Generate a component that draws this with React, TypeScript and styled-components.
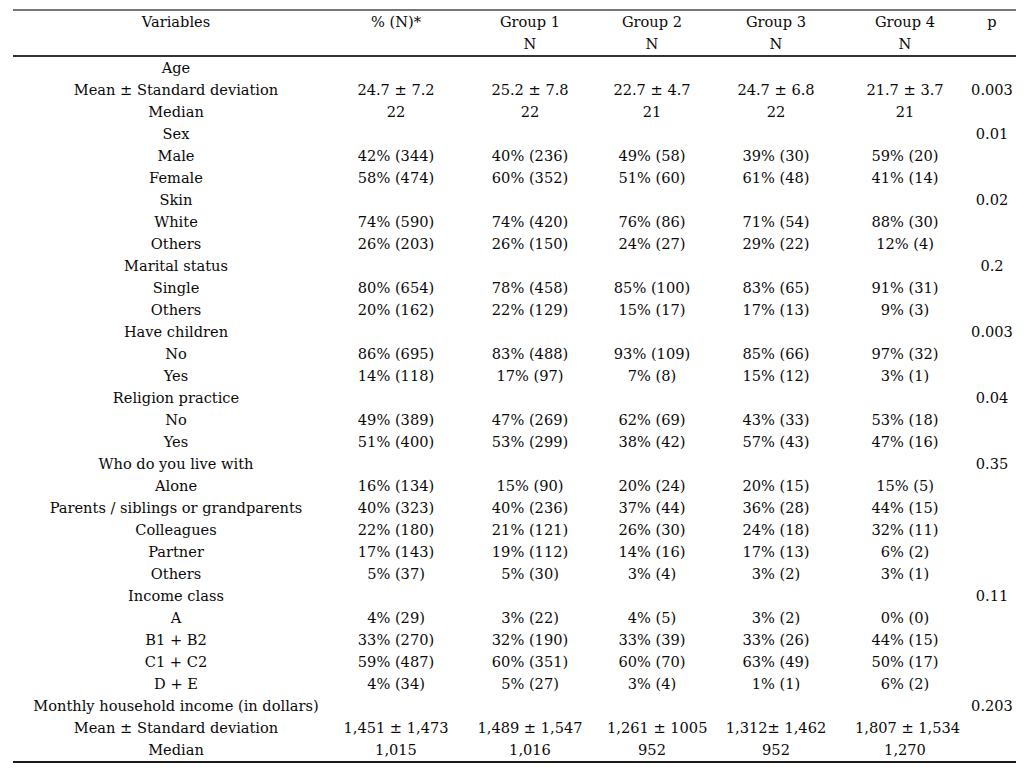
import React from 'react';
import styled, { createGlobalStyle } from 'styled-components';

type Row = {
  label: string;
  values?: string[];
  p?: string;
};

const rows: Row[] = [
  { label: 'Age' },
  { label: 'Mean ± Standard deviation', values: ['24.7 ± 7.2', '25.2 ± 7.8', '22.7 ± 4.7', '24.7 ± 6.8', '21.7 ± 3.7'], p: '0.003' },
  { label: 'Median', values: ['22', '22', '21', '22', '21'] },
  { label: 'Sex', p: '0.01' },
  { label: 'Male', values: ['42% (344)', '40% (236)', '49% (58)', '39% (30)', '59% (20)'] },
  { label: 'Female', values: ['58% (474)', '60% (352)', '51% (60)', '61% (48)', '41% (14)'] },
  { label: 'Skin', p: '0.02' },
  { label: 'White', values: ['74% (590)', '74% (420)', '76% (86)', '71% (54)', '88% (30)'] },
  { label: 'Others', values: ['26% (203)', '26% (150)', '24% (27)', '29% (22)', '12% (4)'] },
  { label: 'Marital status', p: '0.2' },
  { label: 'Single', values: ['80% (654)', '78% (458)', '85% (100)', '83% (65)', '91% (31)'] },
  { label: 'Others', values: ['20% (162)', '22% (129)', '15% (17)', '17% (13)', '9% (3)'] },
  { label: 'Have children', p: '0.003' },
  { label: 'No', values: ['86% (695)', '83% (488)', '93% (109)', '85% (66)', '97% (32)'] },
  { label: 'Yes', values: ['14% (118)', '17% (97)', '7% (8)', '15% (12)', '3% (1)'] },
  { label: 'Religion practice', p: '0.04' },
  { label: 'No', values: ['49% (389)', '47% (269)', '62% (69)', '43% (33)', '53% (18)'] },
  { label: 'Yes', values: ['51% (400)', '53% (299)', '38% (42)', '57% (43)', '47% (16)'] },
  { label: 'Who do you live with', p: '0.35' },
  { label: 'Alone', values: ['16% (134)', '15% (90)', '20% (24)', '20% (15)', '15% (5)'] },
  { label: 'Parents / siblings or grandparents', values: ['40% (323)', '40% (236)', '37% (44)', '36% (28)', '44% (15)'] },
  { label: 'Colleagues', values: ['22% (180)', '21% (121)', '26% (30)', '24% (18)', '32% (11)'] },
  { label: 'Partner', values: ['17% (143)', '19% (112)', '14% (16)', '17% (13)', '6% (2)'] },
  { label: 'Others', values: ['5% (37)', '5% (30)', '3% (4)', '3% (2)', '3% (1)'] },
  { label: 'Income class', p: '0.11' },
  { label: 'A', values: ['4% (29)', '3% (22)', '4% (5)', '3% (2)', '0% (0)'] },
  { label: 'B1 + B2', values: ['33% (270)', '32% (190)', '33% (39)', '33% (26)', '44% (15)'] },
  { label: 'C1 + C2', values: ['59% (487)', '60% (351)', '60% (70)', '63% (49)', '50% (17)'] },
  { label: 'D + E', values: ['4% (34)', '5% (27)', '3% (4)', '1% (1)', '6% (2)'] },
  { label: 'Monthly household income (in dollars)', p: '0.203' },
  { label: 'Mean ± Standard deviation', values: ['1,451 ± 1,473', '1,489 ± 1,547', '1,261 ± 1005', '1,312± 1,462', '1,807 ± 1,534'] },
  { label: 'Median', values: ['1,015', '1,016', '952', '952', '1,270'] },
];

const headers = [
  ['Variables', ''],
  ['% (N)*', ''],
  ['Group 1', 'N'],
  ['Group 2', 'N'],
  ['Group 3', 'N'],
  ['Group 4', 'N'],
];

const App: React.FC = () => {
  return (
    <>
      <GlobalStyle />
      <Table>
        <Head>
          {headers.map(([top, bottom], i) => (
            <Cell key={i}>
              {top}
              <br />
              {bottom}
            </Cell>
          ))}
          <PCell>p</PCell>
        </Head>
        <Body>
          {rows.map((row, i) => (
            <Line key={i}>
              <Cell>{row.label}</Cell>
              {[0, 1, 2, 3, 4].map(j => (
                <Cell key={j}>{row.values ? row.values[j] : ''}</Cell>
              ))}
              <PCell>{row.p || ''}</PCell>
            </Line>
          ))}
        </Body>
      </Table>
    </>
  );
};

const GlobalStyle = createGlobalStyle`
  body {
    margin: 0;
    background: #fff;
    color: #0a0a0a;
    font-family: 'DejaVu Serif', 'Liberation Serif', serif;
  }
`;

const columns = '326px 114px 154px 90px 158px 100px 61px';

const Table = styled.div`
  width: 1003px;
  margin: 9px 0 0 13px;
  border-top: 2px solid #777;
  border-bottom: 2px solid #1a1a1a;
  font-size: 14.6px;
  line-height: 22px;
`;

const Head = styled.div`
  display: grid;
  grid-template-columns: ${columns};
  border-bottom: 2px solid #333;
`;

const Body = styled.div`
  display: flex;
  flex-direction: column;
`;

const Line = styled.div`
  display: grid;
  grid-template-columns: ${columns};
  height: 22px;
`;

const Cell = styled.div`
  text-align: center;
  white-space: nowrap;
`;

const PCell = styled(Cell)`
  padding-left: 13px;
`;

export default App;
